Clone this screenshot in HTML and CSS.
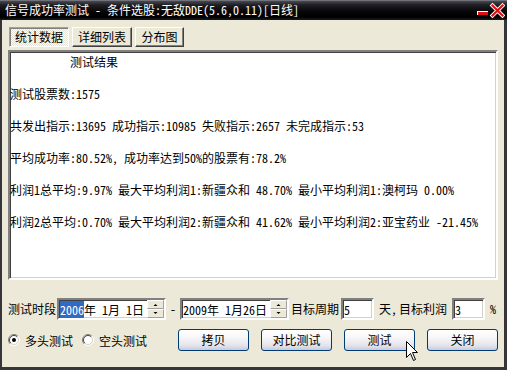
FILE: index.html
```html
<!DOCTYPE html>
<html>
<head>
<meta charset="utf-8">
<link rel="stylesheet" href="styles.css">
</head>
<body>
<div class="window">
  <div class="titlebar">
    <span class="title">信号成功率测试 - 条件选股:无敌DDE(5.6,0.11)[日线]</span>
    <svg class="caption-btns" width="30" height="20" viewBox="0 0 30 20">
      <rect x="2" y="11" width="11" height="4" fill="#fff"/>
      <rect x="3" y="12" width="10" height="3" fill="#e01010"/>
      <path d="M17.5 5.5 L27.5 15.5 M27.5 5.5 L17.5 15.5" stroke="#fff" stroke-width="4" stroke-linecap="square"/>
      <path d="M17.5 5.5 L27.5 15.5 M27.5 5.5 L17.5 15.5" stroke="#e01010" stroke-width="2.2" stroke-linecap="square"/>
    </svg>
  </div>
  <div class="client">
    <div class="tabs">
      <div class="tab active">统计数据</div>
      <div class="tab">详细列表</div>
      <div class="tab narrow">分布图</div>
    </div>
    <div class="result">
      <div class="line head">测试结果</div>
      <div class="line">测试股票数:1575</div>
      <div class="line">共发出指示:13695 成功指示:10985 失败指示:2657 未完成指示:53</div>
      <div class="line">平均成功率:80.52%, 成功率达到50%的股票有:78.2%</div>
      <div class="line">利润1总平均:9.97% 最大平均利润1:新疆众和 48.70% 最小平均利润1:澳柯玛 0.00%</div>
      <div class="line">利润2总平均:0.70% 最大平均利润2:新疆众和 41.62% 最小平均利润2:亚宝药业 -21.45%</div>
    </div>
    <div class="row1">
      <span class="lbl period">测试时段</span>
      <div class="field date">
        <span class="val"><span class="sel">2006</span>年 1月 1日</span>
        <svg class="spin" width="17" height="18" viewBox="0 0 17 18">
          <rect x="0" y="0" width="17" height="18" fill="#ece9d8"/>
          <path d="M0.5 8.5 V0.5 H16.5" stroke="#fff" fill="none"/>
          <path d="M0.5 8.5 H16.5 V0.5" stroke="#a0a0a0" fill="none"/>
          <path d="M0.5 17.5 V9.5 H16.5" stroke="#fff" fill="none"/>
          <path d="M0.5 17.5 H16.5 V9.5" stroke="#a0a0a0" fill="none"/>
          <polygon points="6.5,6 10.5,6 8.5,4" fill="#000"/>
          <polygon points="6.5,12 10.5,12 8.5,14" fill="#000"/>
        </svg>
      </div>
      <span class="lbl dash">-</span>
      <div class="field date">
        <span class="val">2009年 1月26日</span>
        <svg class="spin" width="17" height="18" viewBox="0 0 17 18">
          <rect x="0" y="0" width="17" height="18" fill="#ece9d8"/>
          <path d="M0.5 8.5 V0.5 H16.5" stroke="#fff" fill="none"/>
          <path d="M0.5 8.5 H16.5 V0.5" stroke="#a0a0a0" fill="none"/>
          <path d="M0.5 17.5 V9.5 H16.5" stroke="#fff" fill="none"/>
          <path d="M0.5 17.5 H16.5 V9.5" stroke="#a0a0a0" fill="none"/>
          <polygon points="6.5,6 10.5,6 8.5,4" fill="#000"/>
          <polygon points="6.5,12 10.5,12 8.5,14" fill="#000"/>
        </svg>
      </div>
      <span class="lbl target">目标周期</span>
      <div class="field num">5</div>
      <span class="lbl profit">天,<span class="gap">目标利润</span></span>
      <div class="field num num2">3</div>
      <span class="lbl pct">%</span>
    </div>
    <div class="row2">
      <div class="radios">
        <label class="radio">
          <svg width="12" height="12" viewBox="0 0 12 12">
            <circle cx="6" cy="6" r="5" fill="#fff"/>
            <path d="M9.9 2.1 A5.5 5.5 0 0 0 2.1 9.9" stroke="#808080" fill="none"/>
            <path d="M9.9 2.1 A5.5 5.5 0 0 1 2.1 9.9" stroke="#fff" fill="none"/>
            <path d="M9.2 2.8 A4.5 4.5 0 0 0 2.8 9.2" stroke="#404040" fill="none"/>
            <path d="M9.2 2.8 A4.5 4.5 0 0 1 2.8 9.2" stroke="#d4d0c8" fill="none"/>
            <circle cx="6" cy="6" r="2" fill="#000"/>
          </svg>
          <span>多头测试</span>
        </label>
        <label class="radio">
          <svg width="12" height="12" viewBox="0 0 12 12">
            <circle cx="6" cy="6" r="5" fill="#fff"/>
            <path d="M9.9 2.1 A5.5 5.5 0 0 0 2.1 9.9" stroke="#808080" fill="none"/>
            <path d="M9.9 2.1 A5.5 5.5 0 0 1 2.1 9.9" stroke="#fff" fill="none"/>
            <path d="M9.2 2.8 A4.5 4.5 0 0 0 2.8 9.2" stroke="#404040" fill="none"/>
            <path d="M9.2 2.8 A4.5 4.5 0 0 1 2.8 9.2" stroke="#d4d0c8" fill="none"/>
          </svg>
          <span>空头测试</span>
        </label>
      </div>
      <div class="buttons">
        <div class="btn">拷贝</div>
        <div class="btn">对比测试</div>
        <div class="btn">测试</div>
        <div class="btn">关闭</div>
      </div>
    </div>
  </div>
  <svg class="cursor" width="13" height="21" viewBox="0 0 13 21">
    <path d="M0.5 0.5 V16.5 L4.5 12.5 L7.5 19.5 L9.5 18.5 L6.5 11.5 H11.5 Z" fill="#fff" stroke="#000" stroke-linejoin="miter"/>
  </svg>
</div>
</body>
</html>
```

FILE: styles.css
```css
* { box-sizing: border-box; }
html, body { margin: 0; padding: 0; background: #ece9d8; }
body {
  font-family: "Noto Sans Mono CJK SC", "Noto Sans CJK SC", "DejaVu Sans Mono", sans-serif;
  font-size: 12px;
  color: #000;
}
.window {
  position: relative;
  width: 507px;
  height: 370px;
  overflow: hidden;
}
.titlebar {
  height: 20px;
  display: flex;
  align-items: center;
  padding-left: 5px;
  background: linear-gradient(#9a9aa4 0, #4a4a52 1px, #1e1e24 5px, #050507 12px, #000 17px, #1a1a28 20px);
  color: #fff;
}
.title { white-space: pre; line-height: 20px; }
.caption-btns { margin-left: auto; margin-right: 2px; display: block; }

.client {
  height: 350px;
  border-left: 2px solid #35353a;
  border-right: 3px solid #35353a;
  border-bottom: 3px solid #35353a;
  padding: 7px 6px 0 6px;
  background: #ece9d8;
}
.tabs { display: flex; gap: 3px; margin-left: 1px; height: 20px; }
.tab {
  width: 60px;
  height: 20px;
  line-height: 18px;
  text-align: center;
  border: 1px solid;
  border-color: #fff #404040 #404040 #fff;
  box-shadow: inset -1px -1px #808080;
  background: #ece9d8;
}
.tab.narrow { width: 49px; }
.tab.active {
  border-color: #a0a0a0 #fff #fff #a0a0a0;
  box-shadow: inset 1px 1px #808080;
  background: conic-gradient(#fff 25%, #e4e1d2 0 50%, #fff 0 75%, #e4e1d2 0);
  background-size: 2px 2px;
}
.result {
  margin-top: 3px;
  height: 230px;
  background: #fff;
  border: 2px solid;
  border-color: #808080 #fff #fff #808080;
  box-shadow: inset 1px 1px #404040, inset -1px -1px #d4d0c8;
  padding: 2px 0 0 0;
}
.line { line-height: 16px; margin-bottom: 16px; white-space: pre; }
.line.head { padding-left: 60px; }

.row1 { display: flex; align-items: center; height: 22px; margin-top: 18px; }
.lbl { white-space: pre; line-height: 22px; }
.period { width: 48px; margin-right: 1px; }
.dash { width: 14px; text-align: center; }
.target { margin-left: 2px; margin-right: 2px; }
.profit { margin-left: 5px; }
.gap { margin-left: 2px; }
.pct { margin-left: 5px; }
.field {
  height: 22px;
  background: #fff;
  border: 2px solid;
  border-color: #808080 #fff #fff #808080;
  box-shadow: inset 1px 1px #404040, inset -1px -1px #d4d0c8;
  display: flex;
  align-items: center;
  padding-left: 1px;
}
.val { white-space: pre; }
.date { width: 109px; }
.date .spin { margin-left: auto; margin-right: 0; display: block; }
.sel { background: #316ac5; color: #fff; }
.num { width: 33px; }
.num2 { margin-left: 5px; }

.row2 { display: flex; justify-content: space-between; align-items: center; height: 22px; margin-top: 9px; }
.radios { display: flex; align-items: center; }
.radio { display: flex; align-items: center; }
.radio svg { display: block; margin-right: 5px; }
.radio + .radio { margin-left: 9px; }
.buttons { display: flex; gap: 12px; }
.btn {
  width: 71px;
  height: 22px;
  border: 1px solid #003c74;
  border-radius: 3px;
  background: linear-gradient(#ffffff 0%, #f6f6f8 40%, #e2e2ea 80%, #c9c9da 100%);
  text-align: center;
  line-height: 20px;
}
.cursor { position: absolute; left: 406px; top: 341px; display: block; }
```
